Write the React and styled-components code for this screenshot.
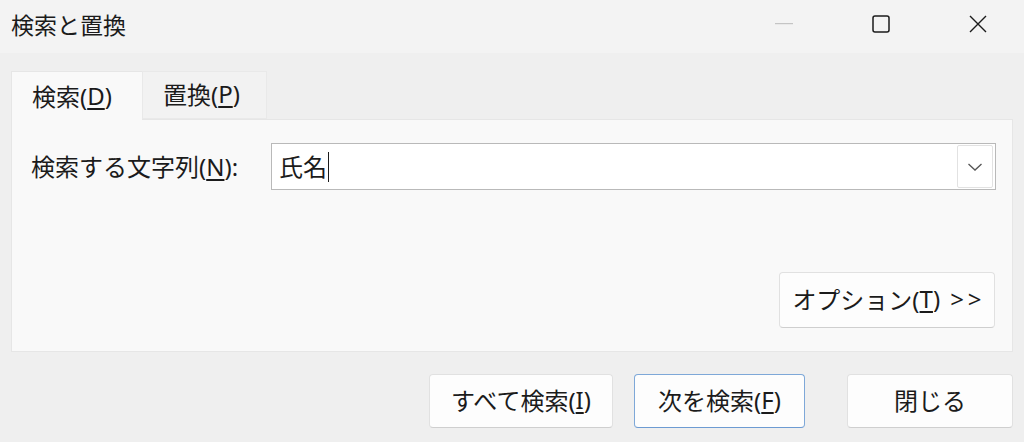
import React from "react";
import styled, { createGlobalStyle } from "styled-components";

const Global = createGlobalStyle`
  html, body { margin: 0; padding: 0; }
  body { font-family: "Noto Sans", "Noto Sans CJK JP", sans-serif; color: #1b1b1b; }
`;

const Window = styled.div`
  width: 1024px;
  height: 442px;
  background: #efefef;
  display: flex;
  flex-direction: column;
  overflow: hidden;
`;

const TitleBar = styled.div`
  height: 53px;
  flex: none;
  background: #f3f3f3;
  display: flex;
  align-items: center;
  padding-left: 11px;
`;

const Title = styled.div`
  font-size: 23px;
  flex: 1;
  margin-top: -6px;
`;

const Controls = styled.div`
  display: flex;
  align-self: stretch;
`;

const Ctrl = styled.div`
  box-sizing: border-box;
  width: ${(p) => p.$w}px;
  display: flex;
  align-items: center;
  justify-content: center;
  padding-bottom: 6px;
  padding-right: ${(p) => p.$pr || 0}px;
`;

const Body = styled.div`
  flex: 1;
  display: flex;
  flex-direction: column;
  padding: 18px 11px 0 11px;
`;

const Tabs = styled.div`
  display: flex;
  align-items: flex-start;
  height: 49px;
`;

const Tab = styled.div`
  box-sizing: border-box;
  width: ${(p) => p.$w}px;
  height: ${(p) => (p.$active ? 50 : 48)}px;
  padding-left: 20px;
  display: flex;
  align-items: center;
  font-size: 24px;
  background: ${(p) => (p.$active ? "#f9f9f9" : "#f2f2f2")};
  border: 1px solid ${(p) => (p.$active ? "#e6e6e6" : "#e9e9e9")};
  border-bottom: ${(p) => (p.$active ? "none" : "1px solid #e9e9e9")};
  ${(p) => (p.$active ? "border-right: none; position: relative; z-index: 1;" : "")}
  padding-bottom: 3px;
`;

const Panel = styled.div`
  box-sizing: border-box;
  height: 233px;
  width: 1002px;
  background: #f9f9f9;
  border: 1px solid #e6e6e6;
  margin-top: -1px;
  padding: 23px 16px 0 19px;
  display: flex;
  flex-direction: column;
`;

const FieldRow = styled.div`
  display: flex;
  align-items: center;
`;

const Label = styled.label`
  width: 240px;
  font-size: 24px;
  padding-bottom: 3px;
`;

const U = styled.span`
  text-decoration: underline;
  text-underline-offset: 3px;
  text-decoration-thickness: 1.5px;
`;

const Chevrons = styled.span`
  letter-spacing: 4px;
  margin-left: 10px;
  margin-right: -4px;
`;

const Combo = styled.div`
  box-sizing: border-box;
  flex: 1;
  height: 47px;
  background: #ffffff;
  border: 1px solid #b9b9b9;
  display: flex;
  align-items: center;
  padding: 1px 2px 1px 7px;
`;

const ComboText = styled.div`
  flex: 1;
  font-size: 24px;
  display: flex;
  align-items: center;
  padding-bottom: 3px;
`;

const Caret = styled.span`
  display: inline-block;
  width: 1px;
  height: 30px;
  background: #1b1b1b;
  margin-left: 1px;
  margin-top: 3px;
`;

const DropBtn = styled.div`
  box-sizing: border-box;
  width: 36px;
  height: 43px;
  border: 1px solid #e2e2e2;
  border-radius: 2px;
  display: flex;
  align-items: center;
  justify-content: center;
`;

const OptionsRow = styled.div`
  display: flex;
  justify-content: flex-end;
  margin-top: 82px;
  padding-right: 1px;
`;

const Button = styled.button`
  box-sizing: border-box;
  width: ${(p) => p.$w}px;
  height: ${(p) => p.$h || 54}px;
  background: #fdfdfd;
  border: 1px solid ${(p) => (p.$focus ? "#7ea8d8" : "#e1e1e1")};
  border-bottom-color: ${(p) => (p.$focus ? "#6d9bd2" : "#cfcfcf")};
  border-radius: 4px;
  font-family: inherit;
  font-size: 24px;
  color: #1b1b1b;
  margin-left: ${(p) => p.$ml || 0}px;
  padding: 0 0 4px;
  display: flex;
  align-items: center;
  justify-content: center;
  white-space: pre;
`;

const Footer = styled.div`
  display: flex;
  justify-content: flex-end;
  margin-top: 22px;
`;

export default function App() {
  return (
    <>
      <Global />
      <Window>
        <TitleBar>
          <Title>検索と置換</Title>
          <Controls>
            <Ctrl $w={86} $pr={7}>
              <svg width="18" height="2" viewBox="0 0 18 2">
                <rect x="0" y="0" width="18" height="1.2" fill="#c4c4c4" />
              </svg>
            </Ctrl>
            <Ctrl $w={102}>
              <svg width="18" height="18" viewBox="0 0 18 18">
                <rect x="1" y="1" width="16" height="16" rx="2" fill="none" stroke="#1b1b1b" strokeWidth="1.5" />
              </svg>
            </Ctrl>
            <Ctrl $w={92}>
              <svg width="18" height="18" viewBox="0 0 18 18">
                <path d="M1 1 L17 17 M17 1 L1 17" stroke="#1b1b1b" strokeWidth="1.4" fill="none" />
              </svg>
            </Ctrl>
          </Controls>
        </TitleBar>
        <Body>
          <Tabs>
            <Tab $active $w={131}>
              検索(<U>D</U>)
            </Tab>
            <Tab $w={125}>
              置換(<U>P</U>)
            </Tab>
          </Tabs>
          <Panel>
            <FieldRow>
              <Label>
                検索する文字列(<U>N</U>):
              </Label>
              <Combo>
                <ComboText>
                  氏名<Caret />
                </ComboText>
                <DropBtn>
                  <svg width="16" height="10" viewBox="0 0 16 10">
                    <path d="M1.5 2 L8 8 L14.5 2" stroke="#555" strokeWidth="1.3" fill="none" />
                  </svg>
                </DropBtn>
              </Combo>
            </FieldRow>
            <OptionsRow>
              <Button $w={216} $h={56}>
                {"オプション("}<U>T</U>{")"}<Chevrons>{">>"}</Chevrons>
              </Button>
            </OptionsRow>
          </Panel>
          <Footer>
            <Button $w={184}>
              すべて検索(<U>I</U>)
            </Button>
            <Button $w={171} $ml={21} $focus>
              次を検索(<U>F</U>)
            </Button>
            <Button $w={166} $ml={42}>
              閉じる
            </Button>
          </Footer>
        </Body>
      </Window>
    </>
  );
}
